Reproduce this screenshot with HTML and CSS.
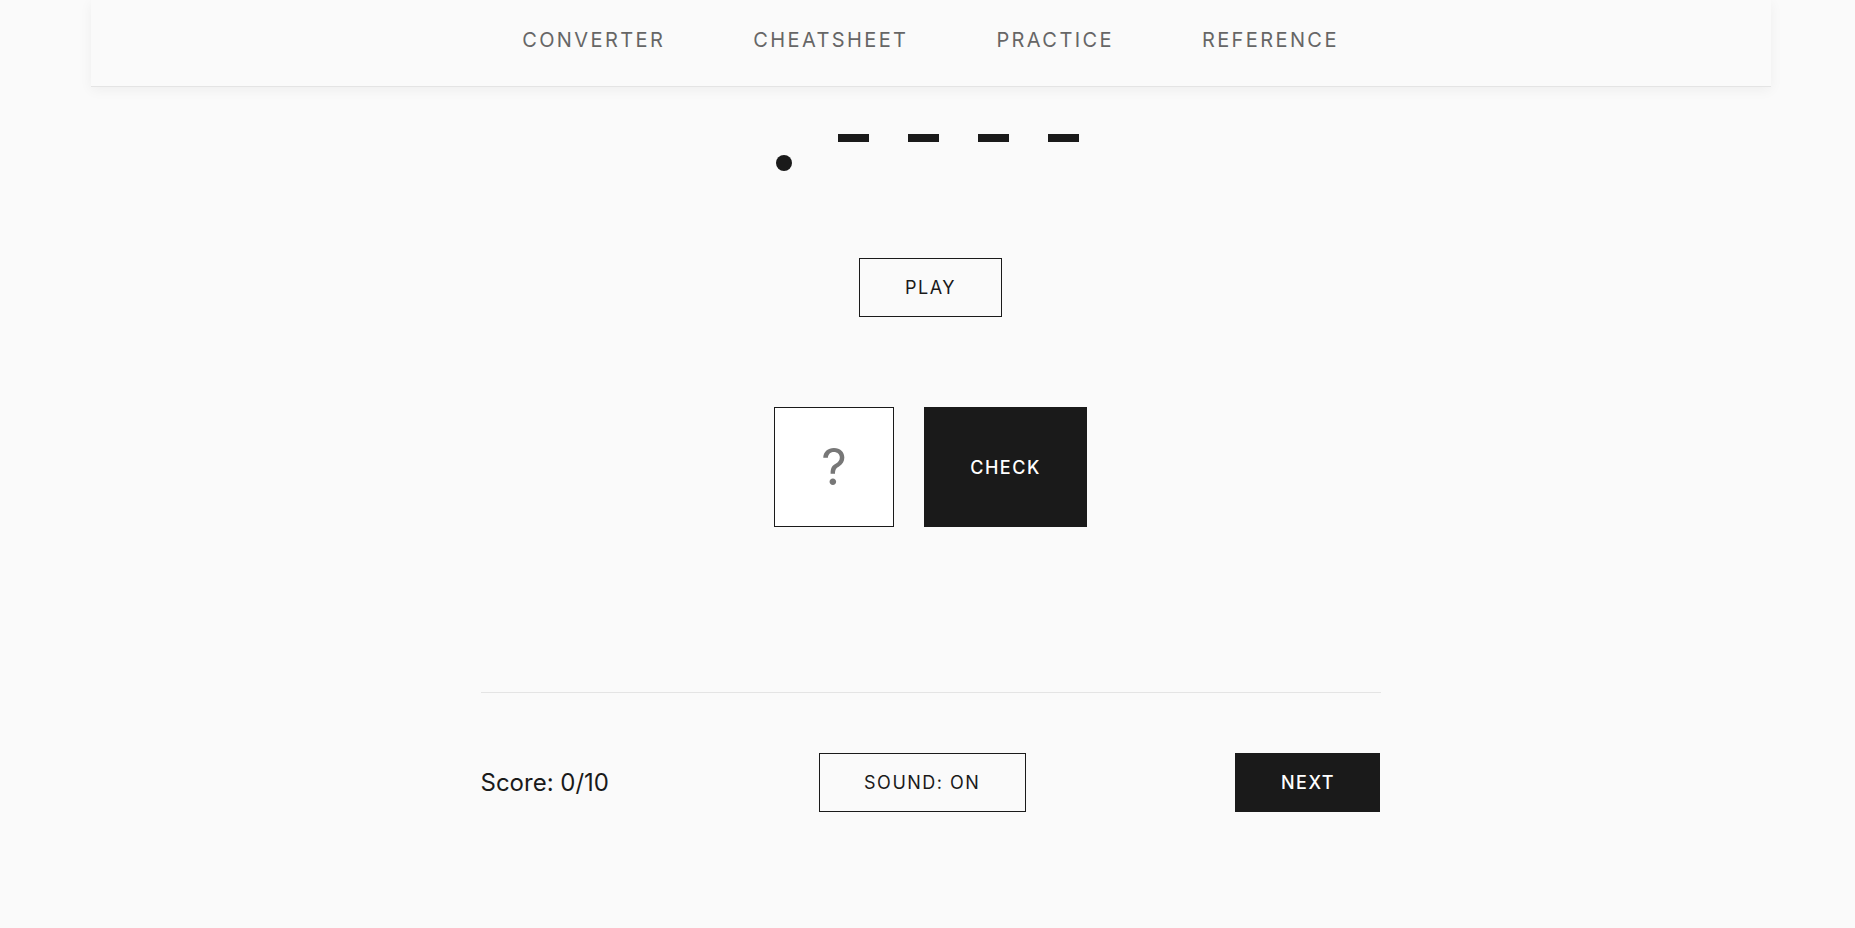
FILE: index.html
```html
<!DOCTYPE html>
<html lang="en">
<head>
<meta charset="utf-8">
<title>Morse Practice</title>
<link rel="stylesheet" href="styles.css">
</head>
<body>
<div class="page">
  <header class="topbar">
    <nav class="nav">
      <a class="nav-link" href="#">CONVERTER</a>
      <a class="nav-link" href="#">CHEATSHEET</a>
      <a class="nav-link" href="#">PRACTICE</a>
      <a class="nav-link" href="#">REFERENCE</a>
    </nav>
  </header>
  <main class="practice">
    <div class="morse" aria-label=".----">
      <span class="sym"><span class="dot"></span></span>
      <span class="sym"><span class="dash"></span></span>
      <span class="sym"><span class="dash"></span></span>
      <span class="sym"><span class="dash"></span></span>
      <span class="sym"><span class="dash"></span></span>
    </div>
    <button class="btn btn-outline btn-play">PLAY</button>
    <div class="answer-row">
      <input class="answer" type="text" placeholder="?">
      <button class="btn btn-dark btn-check">CHECK</button>
    </div>
    <div class="footer-bar">
      <div class="score">Score: 0/10</div>
      <button class="btn btn-outline btn-sound">SOUND: ON</button>
      <button class="btn btn-dark btn-next">NEXT</button>
    </div>
  </main>
</div>
</body>
</html>
```
FILE: styles.css
```css
* { box-sizing: border-box; }
html, body { margin: 0; padding: 0; }
body {
  background: #fafafa;
  font-family: Inter, "Noto Sans", "Liberation Sans", sans-serif;
  color: #1a1a1a;
}
.page {
  padding-left: 6px;
}
.topbar {
  width: 1680px;
  height: 87px;
  margin: 0 auto;
  background: #fafafa;
  border-bottom: 1px solid #e4e4e4;
  box-shadow: 0 3px 12px rgba(0, 0, 0, 0.05);
  padding-top: 28px;
}
.nav {
  display: flex;
  justify-content: center;
  gap: 88px;
}
.nav-link {
  font-size: 20px;
  line-height: 24px;
  letter-spacing: 2.4px;
  color: #666;
  text-decoration: none;
}
.practice {
  display: flex;
  flex-direction: column;
  align-items: center;
}
.morse {
  display: flex;
  align-items: flex-end;
  height: 40px;
  margin-top: 45px;
  padding-right: 14px;
}
.sym {
  width: 70px;
  display: flex;
  justify-content: center;
}
.dot {
  width: 16px;
  height: 16px;
  border-radius: 50%;
  background: #1a1a1a;
  margin-bottom: 1px;
}
.dash {
  width: 31px;
  height: 8px;
  background: #1a1a1a;
  margin-bottom: 30px;
}
.btn {
  font-family: Inter, "Noto Sans", "Liberation Sans", sans-serif;
  font-size: 18px;
  letter-spacing: 1.5px;
  height: 59px;
  padding: 0;
  border-radius: 0;
  cursor: pointer;
}
.btn-outline {
  background: transparent;
  border: 1px solid #1a1a1a;
  color: #1a1a1a;
  font-weight: 400;
}
.btn-dark {
  background: #1a1a1a;
  border: 1px solid #1a1a1a;
  color: #fff;
  font-weight: 500;
}
.btn-play {
  width: 143px;
  margin-top: 86px;
}
.answer-row {
  display: flex;
  gap: 30px;
  margin-top: 90px;
}
.answer {
  width: 120px;
  height: 120px;
  border: 1px solid #1a1a1a;
  background: #fff;
  font-family: Inter, "Noto Sans", "Liberation Sans", sans-serif;
  font-size: 50px;
  text-align: center;
  color: #1a1a1a;
  padding: 0;
  border-radius: 0;
}
.answer::placeholder { color: #777; }
.btn-check {
  width: 163px;
  height: 120px;
}
.footer-bar {
  width: 900px;
  margin-top: 165px;
  border-top: 1px solid #e4e4e4;
  padding-top: 60px;
  display: flex;
  justify-content: space-between;
  align-items: center;
}
.score {
  font-size: 24px;
  line-height: 29px;
}
.btn-sound { width: 207px; }
.btn-next { width: 145px; }
```
